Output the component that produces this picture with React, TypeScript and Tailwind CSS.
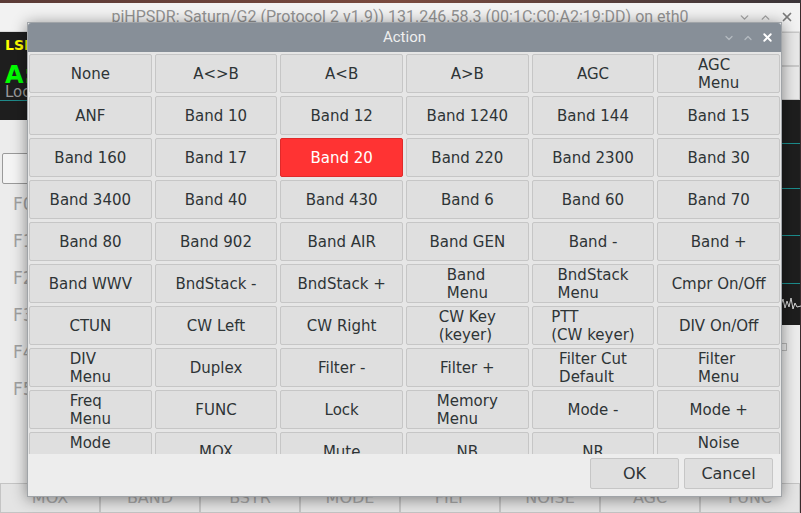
import { X, ChevronDown, ChevronUp } from 'lucide-react';

const actions = [
  'None', 'A<>B', 'A<B', 'A>B', 'AGC', 'AGC\nMenu',
  'ANF', 'Band 10', 'Band 12', 'Band 1240', 'Band 144', 'Band 15',
  'Band 160', 'Band 17', 'Band 20', 'Band 220', 'Band 2300', 'Band 30',
  'Band 3400', 'Band 40', 'Band 430', 'Band 6', 'Band 60', 'Band 70',
  'Band 80', 'Band 902', 'Band AIR', 'Band GEN', 'Band -', 'Band +',
  'Band WWV', 'BndStack -', 'BndStack +', 'Band\nMenu', 'BndStack\nMenu', 'Cmpr On/Off',
  'CTUN', 'CW Left', 'CW Right', 'CW Key\n(keyer)', 'PTT\n(CW keyer)', 'DIV On/Off',
  'DIV\nMenu', 'Duplex', 'Filter -', 'Filter +', 'Filter Cut\nDefault', 'Filter\nMenu',
  'Freq\nMenu', 'FUNC', 'Lock', 'Memory\nMenu', 'Mode -', 'Mode +',
  'Mode\nMenu', 'MOX', 'Mute', 'NB', 'NR', 'Noise\nMenu',
];

const selected = 'Band 20';

const toolbar = ['MOX', 'BAND', 'BSTR', 'MODE', 'FILT', 'NOISE', 'AGC', 'FUNC'];

export default function App() {
  return (
    <div className="relative w-[801px] h-[513px] overflow-hidden bg-[#3a2a2c] font-['DejaVu_Sans',sans-serif]">
      {/* desktop strip */}
      <div className="h-[3px] bg-gradient-to-r from-[#5a3a36] via-[#7a4a3e] to-[#3a3438]" />

      {/* main piHPSDR window (dimmed behind the dialog) */}
      <div className="flex flex-col h-[510px] w-[800px] bg-[#ececec]">
        <div className="relative h-[29px] shrink-0 flex items-center justify-center bg-[#f2f2f2] text-[16px] text-[#939393] font-['Roboto',sans-serif] border-b border-[#dcdcdc]">
          piHPSDR: Saturn/G2 (Protocol 2 v1.9)) 131.246.58.3 (00:1C:C0:A2:19:DD) on eth0
          <div className="absolute right-[6px] top-[7px] flex items-center gap-[8px] text-[#a4a4a4]">
            <ChevronDown size={13} strokeWidth={2.5} />
            <ChevronUp size={13} strokeWidth={2.5} />
            <X size={14} strokeWidth={3} className="text-[#7a7a7a]" />
          </div>
        </div>

        <div className="flex flex-1 min-h-0">
          {/* left column */}
          <div className="flex flex-col w-[700px]">
            <div className="relative h-[88px] bg-[#1e1e1e] px-[5px] pt-[4px]">
              <div className="text-[14px] font-bold text-[#ffff00] leading-[18px]">LSB</div>
              <div className="text-[24px] font-bold text-[#00ff00] leading-[30px] mt-[6px]">A:</div>
              <div className="text-[15px] text-[#9a9a9a] leading-[14px] -mt-[5px]">Loc</div>
              <div className="absolute left-0 right-0 top-[68px] h-px bg-[#1f8a8a]" />
            </div>
            <div className="flex-1 px-[2px] pt-[33px] text-[#a0a0a0]">
              <div className="h-[31px] w-[60px] border border-[#9a9a9a] rounded-[2px] bg-[#f4f4f4]" />
              <div className="mt-[10px] flex flex-col gap-[17px] pl-[11px] text-[17px] leading-[20px]">
                <span>F0</span>
                <span>F1</span>
                <span>F2</span>
                <span>F3</span>
                <span>F4</span>
                <span>F5</span>
              </div>
            </div>
          </div>

          {/* right column */}
          <div className="flex flex-col w-[100px] border-l border-[#d0d0d0]">
            <div className="h-[34px] flex items-center justify-center border border-[#c8c8c8] bg-[#e8e8e8] text-[#9a9a9a] text-[16px]">Mode</div>
            <div className="h-[34px] flex items-center justify-center border border-[#c8c8c8] bg-[#e8e8e8] text-[#9a9a9a] text-[16px]">Menu</div>
            <div className="relative h-[225px] bg-[#1e1e1e]">
              <div className="absolute left-0 right-0 top-[43px] h-px bg-[#1b8c8c]" />
              <div className="absolute left-0 right-0 top-[88px] h-px bg-[#1b8c8c]" />
              <div className="absolute left-0 right-0 top-[135px] h-px bg-[#1b8c8c]" />
              <div className="absolute left-0 right-0 top-[183px] h-px bg-[#1b8c8c]" />
              <svg className="absolute left-0 top-[195px]" width="100" height="20" viewBox="0 0 100 20">
                <polyline
                  points="0,14 10,13 20,14 30,12 40,14 50,13 60,12 70,14 80,10 82,4 84,13 86,6 88,12 90,3 92,14 94,8 96,12 100,11"
                  fill="none"
                  stroke="#d8d8d8"
                  strokeWidth="1"
                />
              </svg>
            </div>
            <div className="flex-1 relative">
              <div className="absolute right-[13px] top-[18px] w-[8px] h-[8px] border border-[#b8b8b8]" />
            </div>
          </div>
        </div>

        {/* bottom toolbar */}
        <div className="h-[30px] shrink-0 grid grid-cols-8">
          {toolbar.map((t) => (
            <div
              key={t}
              className="flex items-center justify-center border border-[#c4c4c4] bg-[#e4e4e4] text-[16px] text-[#a8a8a8]"
            >
              {t}
            </div>
          ))}
        </div>
      </div>

      {/* Action dialog */}
      <div className="absolute left-[27px] top-[22px] w-[755px] h-[475px] flex flex-col bg-[#ededed] border border-[#a0a4a8] shadow-[0_2px_14px_rgba(0,0,0,0.45)]">
        <div className="relative h-[29px] shrink-0 flex items-center justify-center bg-[#878f98] text-[15px] text-[#eeeeee] font-['Roboto',sans-serif] rounded-t-[3px]">
          Action
          <div className="absolute right-[7px] top-[8px] flex items-center gap-[7px] text-[#b4bac0]">
            <ChevronDown size={12} strokeWidth={2.5} />
            <ChevronUp size={12} strokeWidth={2.5} />
            <X size={13} strokeWidth={3.5} className="text-[#ffffff]" />
          </div>
        </div>

        <div className="h-[402px] shrink-0 overflow-hidden bg-[#e6e6e6] px-[1px] pt-[2px]">
          <div className="grid grid-cols-6 gap-x-[3px] gap-y-[3px]">
            {actions.map((a) => {
              const on = a === selected;
              return (
                <div
                  key={a}
                  className={`h-[39px] flex items-center justify-center rounded-[2px] border text-[15px] leading-[18px] ${
                    on
                      ? 'bg-[#ff3333] border-[#e02a2a] text-white'
                      : 'bg-[#dfdfdf] border-[#c6c6c6] text-[#2e3436]'
                  }`}
                >
                  <span className="inline-block text-left whitespace-pre-line">{a}</span>
                </div>
              );
            })}
          </div>
        </div>

        <div className="flex-1 flex justify-end items-start gap-[5px] pt-[4px] pr-[8px] bg-[#ededed]">
          <button className="w-[89px] h-[31px] rounded-[2px] border border-[#c6c6c6] bg-[#dfdfdf] text-[16px] text-[#2e3436]">
            OK
          </button>
          <button className="w-[89px] h-[31px] rounded-[2px] border border-[#c6c6c6] bg-[#dfdfdf] text-[16px] text-[#2e3436]">
            Cancel
          </button>
        </div>
      </div>
    </div>
  );
}
